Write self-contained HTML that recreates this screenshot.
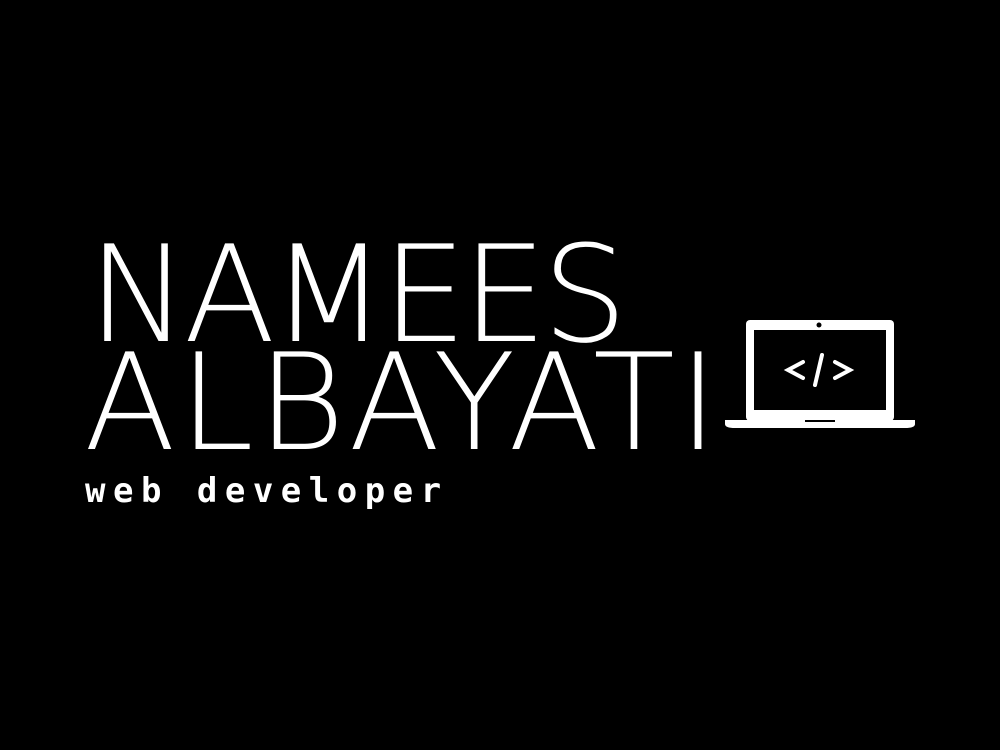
<!DOCTYPE html>
<html><head><style>
body{margin:0;width:1000px;height:750px;background:#000;overflow:hidden;position:relative}
.t{position:absolute;color:#fff;font-family:"DejaVu Sans","Liberation Sans",sans-serif;font-weight:200;font-size:134px;line-height:1;white-space:nowrap;letter-spacing:4px}
.s{position:absolute;left:85px;top:471px;color:#fff;font-family:"DejaVu Sans Mono","Liberation Mono",monospace;font-weight:bold;font-size:34px;letter-spacing:7.5px;white-space:nowrap}
</style></head><body>
<div class="t" style="left:88px;top:228px;letter-spacing:-4.5px">NAMEES</div>
<div class="t" style="left:84px;top:336px;letter-spacing:3.5px">ALBAYATI</div>
<div class="s">web developer</div>
<svg style="position:absolute;left:0;top:0" width="1000" height="750">
<rect x="746" y="320" width="148" height="101" rx="4" fill="#fff"/>
<rect x="754" y="330" width="132" height="80" fill="#000"/>
<circle cx="819" cy="325" r="2.5" fill="#000"/>
<path d="M725 420 H915 V424 Q915 428 905 428 H735 Q725 428 725 424Z" fill="#fff"/>
<rect x="805" y="420" width="30" height="2" fill="#000"/>
<g stroke="#fff" stroke-width="4" fill="none" stroke-linecap="round">
<path d="M803 362 L788 370 L803 378"/>
<path d="M822 355 L815 385"/>
<path d="M835 362 L850 370 L835 378"/>
</g>
</svg>
</body></html>
